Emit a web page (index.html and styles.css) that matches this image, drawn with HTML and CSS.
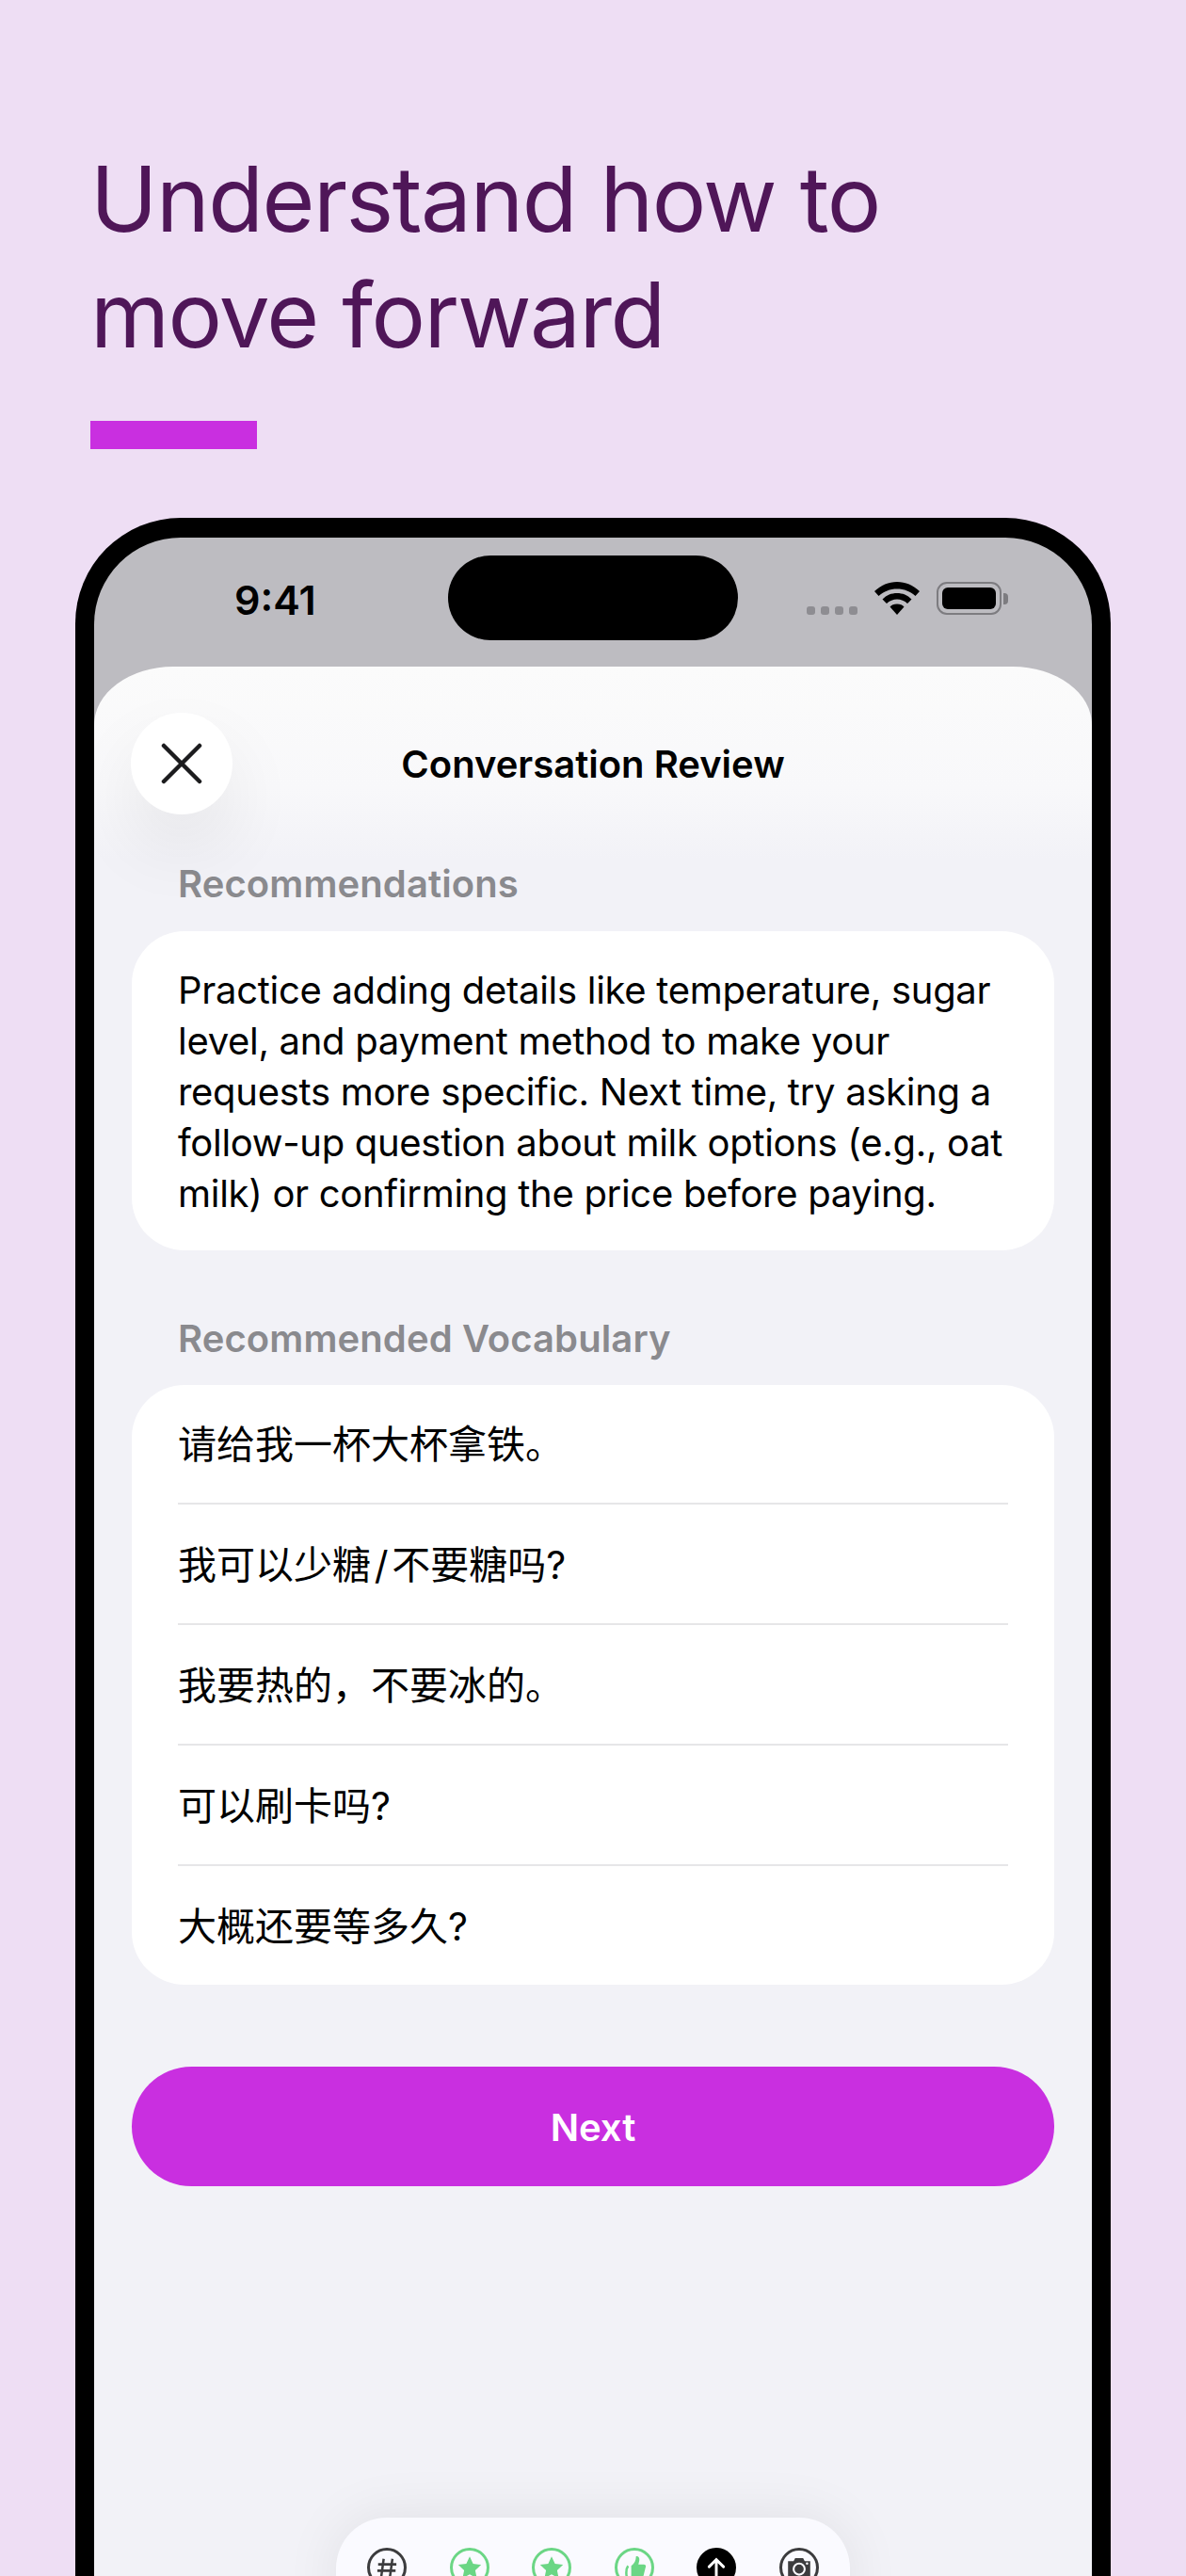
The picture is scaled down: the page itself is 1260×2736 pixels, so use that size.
FILE: index.html
```html
<!DOCTYPE html>
<html lang="en">
<head>
<meta charset="utf-8">
<title>Understand how to move forward</title>
<link rel="stylesheet" href="styles.css">
</head>
<body>
<main class="page">
  <h1 class="headline">Understand how to<br>move forward</h1>
  <div class="accent"></div>
  <section class="phone">
    <div class="screen">
      <header class="status">
        <span class="time">9:41</span>
        <div class="island"></div>
        <div class="indicators">
          <div class="dots"><i></i><i></i><i></i><i></i></div>
          <svg class="wifi" width="48" height="36" viewBox="0 0 48 36"><path d="M24 0C15 0 7 3.500 0 10l4.500 5C10 10 16.500 7.500 24 7.500S38 10 43.500 15L48 10C41 3.500 33 0 24 0Z"/><path d="M24 12c-6 0-11 2-15.500 6.500L13 23c3-3 7-4.500 11-4.500S32 20 35 23l4.500-4.500C35 14 30 12 24 12Z"/><path d="M24 23.500c-3.500 0-5.800 1-7.500 3L24 35l7.500-8.500c-1.700-2-4-3-7.500-3Z"/></svg>
          <div class="battery"><div class="battery-fill"></div></div>
          <div class="battery-tip"></div>
        </div>
      </header>
      <div class="sheet">
        <div class="nav">
          <button class="close" aria-label="Close">
            <svg width="44" height="44" viewBox="0 0 44 44"><path d="M3 3 41 41M41 3 3 41" stroke="#1c1c1e" stroke-width="4.500" stroke-linecap="round" fill="none"/></svg>
          </button>
          <h2 class="nav-title">Conversation Review</h2>
        </div>
        <div class="content">
          <h3 class="label">Recommendations</h3>
          <div class="card para">Practice adding details like temperature, sugar level, and payment method to make your requests more specific. Next time, try asking a follow-up question about milk options (e.g., oat milk) or confirming the price before paying.</div>
          <h3 class="label vocab-label">Recommended Vocabulary</h3>
          <ul class="card list">
            <li>请给我一杯大杯拿铁。</li>
            <li>我可以少糖&#8202;/&#8202;不要糖吗?</li>
            <li>我要热的，不要冰的。</li>
            <li>可以刷卡吗?</li>
            <li>大概还要等多久?</li>
          </ul>
          <button class="next">Next</button>
        </div>
        <div class="dock">
          <span class="ico dark"><svg width="38" height="38" viewBox="0 0 38 38"><path d="M15 8 12 30M26 8 23 30M8 15H31M7 23H30" stroke="#3c3c3e" stroke-width="3" fill="none"/></svg></span>
          <span class="ico green"><svg width="38" height="38" viewBox="0 0 38 38"><path d="M19 5l4.300 9.300 10.200 1.200-7.500 7 2 10.100-9-5-9 5 2-10.100-7.500-7 10.200-1.200Z" fill="#6bd685"/></svg></span>
          <span class="ico green"><svg width="38" height="38" viewBox="0 0 38 38"><path d="M19 5l4.300 9.300 10.200 1.200-7.500 7 2 10.100-9-5-9 5 2-10.100-7.500-7 10.200-1.200Z" fill="#6bd685"/></svg></span>
          <span class="ico green"><svg width="38" height="38" viewBox="0 0 38 38"><path d="M15 17c4-3 6-7 6-12 3-1 5 2 4 6l-1 4h7c2 0 3 2 2 4l-3 12c-.5 1.500-1.500 2-3 2H15Z" fill="#6bd685"/><path d="M11 17c-3 4-3 13 0 17" stroke="#6bd685" stroke-width="3" fill="none"/></svg></span>
          <span class="ico black"><svg width="38" height="38" viewBox="0 0 38 38"><path d="M19 36V10M10 18l9-9 9 9" stroke="#fff" stroke-width="3.500" fill="none" stroke-linecap="round"/></svg></span>
          <span class="ico dark"><svg width="38" height="38" viewBox="0 0 38 38"><path d="M5 11h7l2-4h10l2 4h7v21H5Z" fill="#3c3c3e"/><circle cx="19" cy="21" r="7" fill="none" stroke="#fafaff" stroke-width="2.500"/><circle cx="29" cy="14" r="1.500" fill="#fafaff"/></svg></span>
        </div>
      </div>
    </div>
  </section>
</main>
</body>
</html>
```
FILE: styles.css
```css
* { box-sizing: border-box; }
html, body { margin: 0; padding: 0; }
body {
  width: 1260px;
  height: 2736px;
  overflow: hidden;
  background: #eedef4;
  font-family: Inter, "Noto Sans CJK SC", sans-serif;
}
.page { height: 2736px; overflow: hidden; padding-top: 150px; }
.headline {
  margin: 0 0 0 96px;
  font-size: 96px;
  line-height: 123px;
  font-weight: 400;
  letter-spacing: -1.500px;
  color: #4f1658;
}
.accent { width: 177px; height: 30px; margin: 51px 0 0 96px; background: #c92fe0; }
.phone {
  width: 1100px;
  height: 2300px;
  margin: 73px 0 0 80px;
  padding: 21px 20px 0;
  background: #000;
  border-radius: 112px 112px 0 0;
}
.screen {
  height: 100%;
  background: #bdbcc1;
  border-radius: 92px 92px 0 0;
  overflow: hidden;
  display: flex;
  flex-direction: column;
}
.status { height: 137px; flex: none; position: relative; display: flex; }
.time {
  position: absolute;
  left: 149px;
  top: 41px;
  font-size: 43px;
  line-height: 50px;
  font-weight: 600;
  color: #000;
}
.island {
  width: 308px;
  height: 90px;
  margin: 19px 0 0 376px;
  background: #000;
  border-radius: 45px;
}
.indicators {
  position: absolute;
  left: 757px;
  top: 47px;
  display: flex;
  align-items: flex-end;
}
.dots { display: flex; gap: 6px; }
.dots i { width: 9px; height: 9px; border-radius: 3px; background: #8e8d92; }
.wifi { margin-left: 18px; display: block; margin-bottom: -1px; }
.battery {
  width: 69px;
  height: 35px;
  margin-left: 18px;
  padding: 4px;
  border: 2px solid #7d7c80;
  border-radius: 11px;
}
.battery-fill { height: 100%; background: #000; border-radius: 6px; }
.battery-tip { width: 5px; height: 12px; margin: 0 0 11px 2px; background: #7d7c80; border-radius: 0 4px 4px 0; }
.sheet {
  flex: 1;
  position: relative;
  border-radius: 84px 84px 0 0 / 62px 62px 0 0;
  background: linear-gradient(#fbfbfb 0, #f8f8fa 130px, #f2f2f7 205px);
}
.nav { height: 208px; position: relative; }
.close {
  position: absolute;
  left: 39px;
  top: 49px;
  width: 108px;
  height: 108px;
  border: 0;
  padding: 0;
  border-radius: 50%;
  background: #fff;
  box-shadow: 0 36px 80px rgba(0,0,0,.07);
  display: flex;
  align-items: center;
  justify-content: center;
}
.nav-title {
  margin: 0;
  padding-top: 81px;
  text-align: center;
  font-size: 40px;
  line-height: 46px;
  font-weight: 600;
  color: #000;
}
.content { padding: 0 40px; }
.label {
  margin: 0;
  padding-left: 49px;
  font-size: 40px;
  line-height: 46px;
  font-weight: 600;
  color: #8a8a8e;
  letter-spacing: .1px;
}
.vocab-label { margin-top: 71px; }
.card { background: #fff; border-radius: 56px; }
.para {
  margin-top: 27px;
  height: 339px;
  padding: 36px 39px 0 49px;
  font-size: 40px;
  line-height: 54px;
  color: #000;
  letter-spacing: -.3px;
}
.list {
  margin: 26px 0 0;
  padding: 0 49px;
  list-style: none;
  font-size: 41px;
  color: #000;
}
.list li {
  height: 128px;
  padding-bottom: 5px;
  display: flex;
  align-items: center;
  border-bottom: 2px solid #e6e6e8;
}
.list li:first-child { height: 127px; }
.list li:last-child { border-bottom: 0; height: 126px; }
.next {
  display: block;
  width: 100%;
  height: 127px;
  margin-top: 87px;
  padding: 2px 0 0;
  border: 0;
  border-radius: 64px;
  background: #c92fe0;
  color: #fff;
  font: 600 40px Inter, sans-serif;
}
.dock {
  position: absolute;
  left: 257px;
  top: 1966px;
  width: 546px;
  height: 120px;
  padding: 32px 33px 0;
  background: #fafaff;
  border-radius: 54px;
  box-shadow: 0 0 60px rgba(0,0,0,.08);
  display: flex;
  gap: 45.500px;
  align-items: flex-start;
}
.ico {
  flex: none;
  width: 42px;
  height: 42px;
  border-radius: 50%;
  border: 3px solid #3c3c3e;
  display: flex;
  align-items: center;
  justify-content: center;
  overflow: hidden;
}
.ico svg { flex: none; width: 32px; height: 32px; }
.green { border-color: #6bd685; }
.black { background: #000; border-color: #000; }
```
